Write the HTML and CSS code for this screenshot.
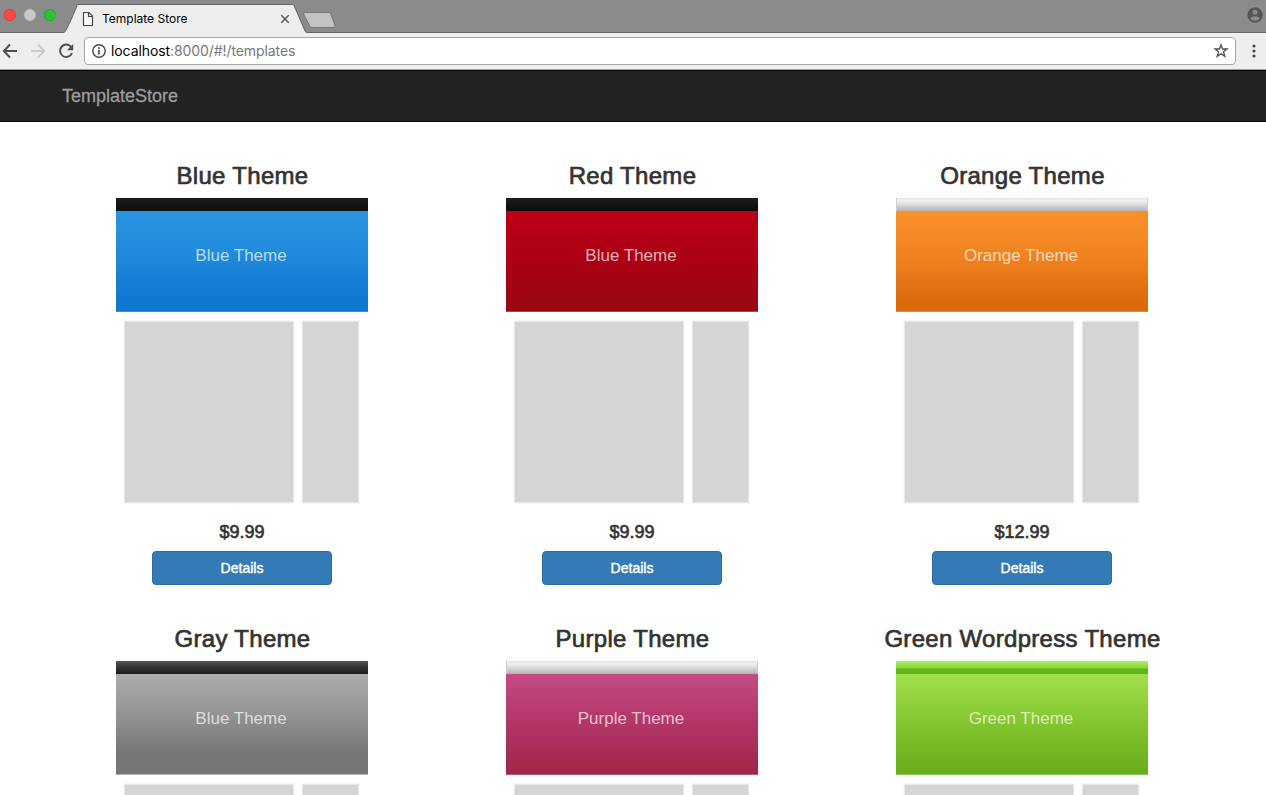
FILE: index.html
```html
<!DOCTYPE html>
<html lang="en">
<head>
<meta charset="utf-8">
<title>Template Store</title>
<link rel="stylesheet" href="styles.css">
</head>
<body>
<div class="tabstrip">
  <svg class="tabstrip-art" width="1266" height="33" viewBox="0 0 1266 33">
    <path d="M64 33C67 31 76.500 7 77 5.500Q77.500 4.500 79 4.500H292Q293.500 4.500 294 5.500L305 31L307 33Z" fill="#eee"/>
    <path d="M0 32.500H64C67 31 76.500 7 77 5.500Q77.500 4.500 79 4.500H292Q293.500 4.500 294 5.500L305 31Q305.500 32.500 307 32.500H1266" fill="none" stroke="#666"/>
    <path d="M305.500 12.500H329Q330 12.500 330.500 13.500L335 25.500Q335.500 27.500 334 27.500H312Q310.500 27.500 310 26.500L303.500 14Q303 12.500 305.500 12.500Z" fill="#c3c3c3" stroke="#777"/>
    <circle cx="9.800" cy="15" r="5.700" fill="#fc4744" stroke="#df3634" stroke-width=".8"/>
    <circle cx="29.900" cy="15" r="5.700" fill="#c9c9c9" stroke="#b5b5b5" stroke-width=".8"/>
    <circle cx="50" cy="15" r="5.700" fill="#29c231" stroke="#1dab25" stroke-width=".8"/>
    <path d="M83.500 12.500H89L92.500 16V25.500H83.500ZM88.500 12.500V16.500H92.500" fill="#f7f7f7" stroke="#484848" stroke-width="1.200"/>
    <path d="M281.300 15.300L288.700 22.700M288.700 15.300L281.300 22.700" stroke="#555" stroke-width="1.500"/>
    <circle cx="1255" cy="15" r="7.700" fill="#555"/>
    <circle cx="1255" cy="12.300" r="2.500" fill="#8b8b8b"/>
    <path d="M1250.200 18.600C1251.500 15.500 1258.500 15.500 1259.800 18.600C1257.500 21.300 1252.500 21.300 1250.200 18.600Z" fill="#8b8b8b"/>
  </svg>
  <span class="tab-title">Template Store</span>
</div>
<div class="toolbar">
  <svg class="nav-icons" width="84" height="36" viewBox="0 33 84 36" fill="none" stroke-width="2">
    <path d="M17 51H4M10 44.500L3.800 51L10 57.500" stroke="#4f4f4f"/>
    <path d="M31 51H44M38 44.500L44.200 51L38 57.500" stroke="#ccc"/>
    <path d="M71.300 47.200A6.200 6.200 0 1 0 72 53" stroke="#4f4f4f"/>
    <path d="M73.200 44V50.300H67Z" fill="#4f4f4f"/>
  </svg>
  <div class="address">
    <svg class="info" width="16" height="16" viewBox="0 0 16 16"><circle cx="8" cy="8" r="6.200" fill="none" stroke="#484848" stroke-width="1.400"/><path d="M8 7V11.500M8 4.300V5.900" stroke="#484848" stroke-width="1.700"/></svg>
    <span class="url"><b class="host">localhost</b>:8000/#!/templates</span>
    <svg class="star" width="16" height="16" viewBox="0 0 16 16"><path d="M8 1.900L9.600 6H14L10.500 8.800L11.800 13.400L8 10.700L4.200 13.400L5.500 8.800L2 6H6.400Z" fill="none" stroke="#505050" stroke-width="1.300"/></svg>
  </div>
  <svg class="menu" width="6" height="16" viewBox="0 0 6 16" fill="#484848"><circle cx="3" cy="3" r="1.600"/><circle cx="3" cy="8" r="1.600"/><circle cx="3" cy="13" r="1.600"/></svg>
</div>
<nav class="navbar"><a class="brand">TemplateStore</a></nav>
<main class="grid">
  <section class="card">
    <h3 class="name">Blue Theme</h3>
    <div class="thumb blue"><div class="bar"></div><div class="hero">Blue Theme</div><div class="panels"><div class="panel main"></div><div class="panel side"></div></div></div>
    <h4 class="price">$9.99</h4>
    <a class="btn">Details</a>
  </section>
  <section class="card">
    <h3 class="name">Red Theme</h3>
    <div class="thumb red"><div class="bar"></div><div class="hero">Blue Theme</div><div class="panels"><div class="panel main"></div><div class="panel side"></div></div></div>
    <h4 class="price">$9.99</h4>
    <a class="btn">Details</a>
  </section>
  <section class="card">
    <h3 class="name">Orange Theme</h3>
    <div class="thumb orange"><div class="bar"></div><div class="hero">Orange Theme</div><div class="panels"><div class="panel main"></div><div class="panel side"></div></div></div>
    <h4 class="price">$12.99</h4>
    <a class="btn">Details</a>
  </section>
  <section class="card">
    <h3 class="name">Gray Theme</h3>
    <div class="thumb gray"><div class="bar"></div><div class="hero">Blue Theme</div><div class="panels"><div class="panel main"></div><div class="panel side"></div></div></div>
  </section>
  <section class="card">
    <h3 class="name">Purple Theme</h3>
    <div class="thumb purple"><div class="bar"></div><div class="hero">Purple Theme</div><div class="panels"><div class="panel main"></div><div class="panel side"></div></div></div>
  </section>
  <section class="card">
    <h3 class="name">Green Wordpress Theme</h3>
    <div class="thumb green"><div class="bar"></div><div class="hero">Green Theme</div><div class="panels"><div class="panel main"></div><div class="panel side"></div></div></div>
  </section>
</main>
</body>
</html>
```
FILE: styles.css
```css
* { box-sizing: border-box; }
body {
  margin: 0;
  height: 795px;
  overflow: hidden;
  background: #fff;
  color: #333;
  font-family: "Liberation Sans", Arial, sans-serif;
}
.tabstrip {
  position: relative;
  height: 33px;
  padding-left: 102px;
  background: #8b8b8b;
}
.tabstrip-art { position: absolute; left: 0; top: 0; }
.tab-title {
  position: relative;
  display: block;
  padding-top: 3px;
  font: 12px/32px Inter, sans-serif;
  color: #000;
}
.toolbar {
  display: flex;
  align-items: flex-start;
  height: 37px;
  background: #eee;
  border-bottom: 1px solid #9f9f9f;
}
.address {
  display: flex;
  align-items: center;
  width: 1152px;
  height: 28px;
  margin-top: 4px;
  padding: 0 6px;
  background: #fff;
  border: 1px solid #a5a5a5;
  border-radius: 4px;
}
.url {
  flex: 1;
  margin-left: 4px;
  font: 14px/26px Inter, sans-serif;
  letter-spacing: -.09px;
  color: #777;
}
.host { font-weight: 400; color: #000; }
.menu { margin: 10px 0 0 15px; }
.navbar {
  height: 52px;
  padding-left: 62px;
  background: #222;
  border-top: 1px solid #080808;
  border-bottom: 1px solid #080808;
}
.brand { font-size: 18px; line-height: 50px; color: #9d9d9d; -webkit-text-stroke: .3px #9d9d9d; }
.grid {
  display: grid;
  grid-template-columns: repeat(3, 390px);
  grid-auto-rows: 463px;
  height: 633px;
  overflow: hidden;
  margin: 40px 0 0 47px;
}
.card { display: flex; flex-direction: column; align-items: center; }
.name {
  margin: 0 0 9px;
  padding: 1px 0 0 1px;
  font-size: 24px;
  font-weight: 400;
  line-height: 26px;
  letter-spacing: .3px;
  -webkit-text-stroke: .7px #333;
}
.thumb { width: 252px; height: 314px; }
.bar { height: 12.500px; background: linear-gradient(#1b1d1c, #101211 65%, #0c0e0d); }
.hero {
  height: 101.500px;
  padding-right: 2px;
  border-bottom: 1px solid #ccc;
  color: rgba(255, 255, 255, .7);
  font-size: 17px;
  line-height: 89px;
  text-align: center;
}
.panels { display: flex; gap: 8px; margin: 9px 0 0 8px; }
.panel {
  height: 182px;
  background: #d5d5d5;
  border: 1px solid #e9e9e9;
  box-shadow: 0 0 0 1px #f8f8f8;
}
.main { width: 170px; }
.side { width: 57px; }
.blue .hero { background: linear-gradient(#2994e2, #238ddd 35%, #0f78d1 88%); border-color: #3a8fd7; }
.red .hero { background: linear-gradient(#bd0018, #a90014 55%, #980911); border-color: #b5424a; }
.orange .hero { background: linear-gradient(#fb9029, #f08320 45%, #db6a0c 92%); border-color: #dd8438; }
.gray .hero { background: linear-gradient(#adadad, #909090 45%, #777 78%); border-color: #b0b0b0; }
.purple .hero { background: linear-gradient(#c54a84, #b4376a 45%, #9f2648); border-color: #b55a74; }
.green .hero { background: linear-gradient(#a0e14b, #82c52f 50%, #6dae1c 92%); border-color: #90be5b; }
.orange .bar, .purple .bar {
  background: linear-gradient(#e2e2e2, #f2f2f2 20%, #dcdcdd 50%, #b3b3b5);
  box-shadow: inset 1px 0 #ccc, inset -1px 0 #ccc;
}
.gray .bar { background: linear-gradient(#555, #333 50%, #1b1b1b); }
.green .bar { background: linear-gradient(#aaf05e, #89d440 55%, #60b317 60%, #64b31b); }
.price {
  margin: 11px 0 9px;
  font-size: 18px;
  font-weight: 400;
  line-height: 19px;
  -webkit-text-stroke: .65px #333;
}
.btn {
  width: 180px;
  height: 34px;
  background: #337ab7;
  border: 1px solid #2e6da4;
  border-radius: 4px;
  color: #fff;
  font-size: 14px;
  line-height: 32px;
  text-align: center;
  -webkit-text-stroke: .4px #fff;
}
```
